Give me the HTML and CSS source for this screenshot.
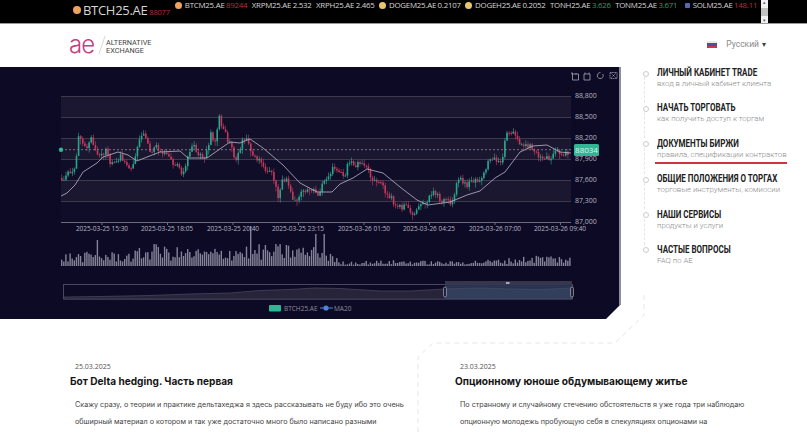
FILE: index.html
```html
<!DOCTYPE html>
<html lang="ru">
<head>
    <meta charset="UTF-8">
    <meta name="viewport" content="width=device-width, initial-scale=1.0">
    <title>Alternative Exchange</title>
    <link rel="stylesheet" href="styles.css">
</head>
<body>
    <div class="ticker">
        <div class="ticker-list">
            <div class="tick tick-big"><span class="coin coin-btc"></span><span class="sym">BTCH25.AE</span> <span class="down">88077</span></div>
            <div class="tick"><span class="coin coin-btc"></span><span class="sym">BTCM25.AE</span> <span class="down">89244</span></div>
            <div class="tick"><span class="sym">XRPM25.AE</span> 2.532</div>
            <div class="tick"><span class="sym">XRPH25.AE</span> 2.465</div>
            <div class="tick"><span class="coin coin-doge"></span><span class="sym">DOGEM25.AE</span> 0.2107</div>
            <div class="tick"><span class="coin coin-doge"></span><span class="sym">DOGEH25.AE</span> 0.2052</div>
            <div class="tick"><span class="sym">TONH25.AE</span> <span class="up">3.626</span></div>
            <div class="tick"><span class="sym">TONM25.AE</span> <span class="up">3.671</span></div>
            <div class="tick"><span class="coin coin-sol"></span><span class="sym">SOLM25.AE</span> <span class="down">148.11</span></div>
        </div>
        <div class="scrollbar"><span class="scroll-arrow">▴</span><span class="scroll-thumb"></span><span class="scroll-arrow">▾</span></div>
    </div>

    <div class="header">
        <div class="logo">
            <span class="logo-ae">ae</span>
            <svg class="logo-slash" width="8" height="20" viewBox="0 0 8 20"><path d="M7 1L1 19" stroke="#d8d8d8" fill="none"/></svg>
            <span class="logo-name">ALTERNATIVE<br>EXCHANGE</span>
        </div>
        <div class="lang">
            <span class="flag"></span>
            <span>Русский</span>
            <span class="lang-caret">▾</span>
        </div>
    </div>

    <div class="top">
        <div class="chart-panel">
            <svg id="chart" class="chart" width="619" height="252" viewBox="0 67 619 252">
                <g id="bands"></g>
                <g id="candles"></g>
                <path id="ma" fill="none" stroke="#b9b8cc" stroke-width="0.8"/>
                <path d="M61 149.7H571" stroke="#2fb795" stroke-width="0.8" stroke-dasharray="2 2"/>
                <circle cx="61" cy="149.7" r="2.2" fill="#2fb795"/>
                <g id="volume" fill="#85839a"></g>

                <g class="y-axis">
                    <text x="575" y="98">88,800</text>
                    <text x="575" y="119">88,500</text>
                    <text x="575" y="140">88,200</text>
                    <text x="575" y="161">87,900</text>
                    <text x="575" y="182">87,600</text>
                    <text x="575" y="203">87,300</text>
                    <text x="575" y="224">87,000</text>
                </g>
                <rect x="574" y="144" width="25" height="12" rx="1.5" fill="#2fb795"/>
                <text class="price-tag" x="586.5" y="153">88034</text>

                <g class="x-axis">
                    <text x="102" y="231">2025-03-25 15:30</text>
                    <text x="167" y="231">2025-03-25 18:05</text>
                    <text x="233" y="231">2025-03-25 20:40</text>
                    <text x="298" y="231">2025-03-25 23:15</text>
                    <text x="364" y="231">2025-03-26 01:50</text>
                    <text x="429" y="231">2025-03-26 04:25</text>
                    <text x="495" y="231">2025-03-26 07:00</text>
                    <text x="560" y="231">2025-03-26 09:40</text>
                </g>

                <g fill="none" stroke="#a5a4b3" stroke-width="0.8">
                    <path d="M571 73h1.500v7h6v-6h-7M576 73v1.500"/>
                    <path d="M584 74h6v6h-6zM585 72.500v1.500M589 72.500v1.500"/>
                    <path d="M600.500 72.600a3 3 0 1 0 2.200 1.300M598 75a3 3 0 0 1 0-.4"/>
                    <path d="M610 72.500h7v6h-7zM611.500 73.500l4 4M615.500 73.500l-4 4" stroke-dasharray="1.500 0.700"/>
                </g>

                <!-- data zoom -->
                <rect x="63.500" y="284.500" width="509" height="14.500" fill="none" stroke="#4a465f"/>
                <path id="zoomArea" fill="#272339" stroke="#4e4a64" stroke-width="0.7"/>
                <rect x="445" y="281" width="127" height="4" fill="#37364c"/>
                <rect x="506" y="282" width="3.500" height="2" fill="#a9a8b5"/>
                <rect x="445" y="285" width="127" height="14" fill="#3a5072" fill-opacity="0.6"/>
                <rect x="443.500" y="287" width="3" height="10" rx="1.500" fill="#1f2238" stroke="#a5a4b3" stroke-width="0.7"/>
                <rect x="570.500" y="287" width="3" height="10" rx="1.500" fill="#1f2238" stroke="#a5a4b3" stroke-width="0.7"/>

                <!-- legend -->
                <rect x="269" y="305" width="12" height="6.500" rx="1" fill="#2fb795"/>
                <text class="legend" x="284" y="310.500">BTCH25.AE</text>
                <path d="M320 308H333" stroke="#4d82d8"/>
                <circle cx="326" cy="308" r="2.600" fill="#4d82d8"/>
                <text class="legend" x="334" y="310.500">MA20</text>
            </svg>
        </div>

        <ul class="side-nav">
            <li class="nav-item"><h3>ЛИЧНЫЙ КАБИНЕТ TRADE</h3><p>вход в личный кабинет клиента</p></li>
            <li class="nav-item"><h3>НАЧАТЬ ТОРГОВАТЬ</h3><p>как получить доступ к торгам</p></li>
            <li class="nav-item nav-active"><h3>ДОКУМЕНТЫ БИРЖИ</h3><p>правила, спецификации контрактов</p></li>
            <li class="nav-item"><h3>ОБЩИЕ ПОЛОЖЕНИЯ О ТОРГАХ</h3><p>торговые инструменты, комиосии</p></li>
            <li class="nav-item"><h3>НАШИ СЕРВИСЫ</h3><p>продукты и услуги</p></li>
            <li class="nav-item"><h3>ЧАСТЫЕ ВОПРОСЫ</h3><p>FAQ по AE</p></li>
        </ul>
    </div>

    <svg class="dashes" width="807" height="436" viewBox="0 0 807 436">
        <path d="M644 295V315L615 343H433L418 357V436" fill="none" stroke="#e6e6e6" stroke-dasharray="5 4"/>
    </svg>

    <div class="articles">
        <div class="article">
            <div class="article-date">25.03.2025</div>
            <h2>Бот Delta hedging. Часть первая</h2>
            <p>Скажу сразу, о теории и практике дельтахеджа я здесь рассказывать не буду ибо это очень<br>обширный материал о котором и так уже достаточно много было написано разными</p>
        </div>
        <div class="article">
            <div class="article-date">23.03.2025</div>
            <h2>Опционному юноше обдумывающему житье</h2>
            <p>По странному и случайному стечению обстоятельств я уже года три наблюдаю<br>опционную молодежь пробующую себя в спекуляциях опционами на</p>
        </div>
    </div>

    <script src="chart.js"></script>
</body>
</html>
```

FILE: styles.css
```css
* {
    margin: 0;
    padding: 0;
    box-sizing: border-box;
}

html, body {
    height: 100%;
    overflow: hidden;
}

body {
    position: relative;
    font-family: 'Open Sans', sans-serif;
    background: #fff;
    color: #222;
}

.ticker {
    height: 24px;
    background: #000;
    border-bottom: 1px solid #9a9a9a;
    display: flex;
    padding-left: 73px;
}

.ticker-list {
    width: 688px;
    display: flex;
    align-items: flex-start;
    color: #d6d6d6;
    font-size: 7.900px;
    line-height: 11px;
    letter-spacing: -0.25px;
    white-space: nowrap;
    overflow: hidden;
}

.tick {
    display: flex;
    align-items: center;
    gap: 1.500px;
    margin-right: 4.400px;
}

.tick-big {
    font-size: 13px;
    line-height: 20px;
    margin-right: 5px;
    align-items: flex-end;
    letter-spacing: -0.3px;
    gap: 2px;
}

.tick-big .down {
    font-size: 7.500px;
    line-height: 15px;
    letter-spacing: -0.2px;
}

.tick-big .coin {
    align-self: center;
    width: 8px;
    height: 8px;
    margin-right: 0;
}

.coin {
    width: 7px;
    height: 7px;
    border-radius: 50%;
    margin-right: 1.500px;
    flex: none;
}

.coin-btc { background: #eda35e; }
.coin-doge { background: #e6c66f; }
.coin-sol { background: #5c66b8; width: 5px; height: 5px; border-radius: 1px; margin: 0 1.500px 0 3px; }

.down { color: #b4303f; }
.up { color: #2c9c6c; }

.scrollbar {
    width: 7px;
    height: 23px;
    background: #f1f1f1;
    display: flex;
    flex-direction: column;
    align-items: center;
    justify-content: space-between;
}

.scroll-arrow {
    font-size: 5px;
    line-height: 5px;
    color: #666;
}

.scroll-thumb {
    width: 7px;
    height: 8px;
    background: #c1c1c1;
}

.header {
    height: 43px;
    display: flex;
    align-items: center;
    justify-content: space-between;
    padding: 0 41px 1px 69px;
}

.logo {
    display: flex;
    align-items: center;
}

.logo-ae {
    font-family: 'Inter', sans-serif;
    font-weight: 300;
    font-size: 24px;
    line-height: 30px;
    letter-spacing: -1px;
    color: #c63d82;
}

.logo-slash {
    margin: 0 0 0 4px;
}

.logo-name {
    font-family: 'Roboto', sans-serif;
    font-size: 7.300px;
    line-height: 8px;
    color: #444;
    padding-top: 3px;
}

.lang {
    display: flex;
    align-items: center;
    font-family: 'Roboto', sans-serif;
    font-size: 8.500px;
    color: #888;
    padding-bottom: 2px;
}

.flag {
    width: 10px;
    height: 7px;
    margin-right: 9px;
    background: linear-gradient(#e8e8f0 0 33%, #4a4f9c 33% 66%, #c23a4a 66%);
}

.lang-caret {
    margin-left: 3px;
    font-size: 8px;
    color: #444;
}

.top {
    display: flex;
    height: 252px;
}

.chart-panel {
    width: 621px;
    height: 252px;
    flex: none;
    background: #0d0a25;
    border-right: 2px solid #8f8e9c;
    clip-path: polygon(0 0, 100% 0, 100% 237px, 606px 100%, 0 100%);
}

.chart {
    display: block;
}

.y-axis text, .x-axis text {
    font-family: 'Open Sans', sans-serif;
    font-size: 7px;
    fill: #b5b4c0;
}

.x-axis text {
    text-anchor: middle;
    font-size: 6.500px;
}

.price-tag {
    font-family: 'Open Sans', sans-serif;
    font-size: 8px;
    fill: #d8f3ea;
    text-anchor: middle;
}

.legend {
    font-family: 'Open Sans', sans-serif;
    font-size: 6.500px;
    fill: #8d8c9c;
}

.side-nav {
    list-style: none;
    padding: 0 0 0 36px;
}

.nav-item {
    height: 35.400px;
    position: relative;
    z-index: 1;
}

.nav-item::before {
    content: '';
    position: absolute;
    left: -14.500px;
    top: 3.500px;
    width: 4px;
    height: 4px;
    border: 1px solid #ccc;
    border-radius: 50%;
    background: #fff;
}

.nav-item:not(:last-child)::after {
    content: '';
    position: absolute;
    left: -13px;
    top: 10px;
    height: 26px;
    border-left: 1px dashed #e6e6e6;
}

.nav-item h3 {
    font-family: 'Roboto', sans-serif;
    font-size: 10px;
    line-height: 11px;
    font-weight: 700;
    color: #222;
    white-space: nowrap;
    transform: scaleX(0.8);
    transform-origin: left center;
}

.nav-item p {
    font-family: 'Roboto', sans-serif;
    font-weight: 300;
    font-size: 7.800px;
    line-height: 11px;
    color: #8c8c8c;
    white-space: nowrap;
}

.nav-active p {
    border-bottom: 2px solid #c8373f;
    margin-left: -2px;
    padding-left: 2px;
    padding-bottom: 2px;
    width: 132px;
}

.dashes {
    position: absolute;
    left: 0;
    top: 0;
    pointer-events: none;
}

.articles {
    display: flex;
    padding: 43px 0 0 70px;
}

.article {
    position: relative;
    width: 385px;
    flex: none;
}

.article-date {
    font-size: 7px;
    line-height: 10px;
    color: #555;
    padding-left: 5px;
}

.article h2 {
    font-family: 'Inter', sans-serif;
    font-size: 10.100px;
    line-height: 14px;
    font-weight: 700;
    color: #151515;
    margin: 2px 0 8px;
    white-space: nowrap;
}

.article p {
    font-family: 'Inter', sans-serif;
    font-size: 7.200px;
    line-height: 17px;
    color: #444;
    padding-left: 5px;
    white-space: nowrap;
}
```

FILE: chart.js
```js
var NS = 'http://www.w3.org/2000/svg';

// price path traced by hand, [x, y] in page pixels
var pricePath = [[61,178],[65,182],[68,173],[72,172],[77,165],[80,138],[83,143],[87,148],[93,137],[97,152],[102,158],[107,150],[112,163],[117,165],[122,157],[128,168],[133,168],[139,148],[143,133],[147,140],[152,152],[158,147],[163,155],[168,152],[173,163],[178,163],[183,175],[188,163],[193,145],[200,153],[207,157],[212,135],[217,142],[220,117],[225,130],[230,143],[238,160],[243,142],[248,138],[253,152],[258,160],[263,160],[267,173],[272,172],[277,185],[279,202],[283,182],[288,177],[293,198],[297,202],[303,193],[312,190],[317,192],[320,197],[325,182],[330,178],[335,165],[340,172],[345,178],[350,162],[357,165],[367,163],[372,180],[382,185],[390,195],[398,207],[407,207],[415,213],[420,205],[427,203],[435,192],[443,200],[453,202],[460,178],[467,185],[475,182],[483,178],[492,157],[503,160],[508,133],[515,133],[523,145],[532,147],[540,155],[552,160],[558,150],[566,155],[571,152]];
var maPath = [[61,196],[67,193],[75,185],[83,172],[97,163],[103,157],[118,152],[128,155],[137,161],[147,157],[160,152],[180,151],[188,158],[207,158],[217,151],[230,142],[240,143],[250,139],[263,148],[283,165],[300,183],[317,192],[320,192],[332,192],[340,184],[353,178],[367,169],[383,173],[400,187],[417,200],[428,205],[450,202],[467,195],[480,191],[495,178],[505,172],[520,152],[533,146],[547,145],[560,152],[571,153]];
// rough volume height along the x axis
var volEnvelope = [[61,11],[90,12],[130,12],[150,19],[175,16],[210,15],[240,18],[290,19],[325,15],[340,4],[400,5],[450,4],[500,6],[540,10],[571,8]];
var spikes = { 97: 26, 249: 40, 315: 32, 323: 32, 153: 22, 158: 19 };

var seed = 2025;
function rnd() {
    seed = (seed * 1103515245 + 12345) % 2147483648;
    return seed / 2147483648;
}

function interp(path, x) {
    for (var i = 1; i < path.length; i++) {
        if (x <= path[i][0]) {
            var a = path[i - 1], b = path[i];
            return a[1] + (b[1] - a[1]) * (x - a[0]) / (b[0] - a[0]);
        }
    }
    return path[path.length - 1][1];
}

function add(parent, tag, attrs) {
    var el = document.createElementNS(NS, tag);
    for (var k in attrs) el.setAttribute(k, attrs[k]);
    parent.appendChild(el);
    return el;
}

function line(path) {
    return 'M' + path.map(function (p) { return p[0] + ' ' + p[1]; }).join('L');
}

// background bands and grid
var bands = document.getElementById('bands');
for (var b = 0; b < 6; b++) {
    add(bands, 'rect', { x: 61, y: 96 + b * 21, width: 510, height: 21, fill: b % 2 ? '#100d29' : '#1b1731' });
}
for (var g = 0; g <= 6; g++) {
    add(bands, 'rect', { x: 61, y: 96 + g * 21, width: 510, height: 1, fill: g === 6 ? '#6d6b80' : '#3d3a4e' });
}
for (var t = 0; t < 8; t++) {
    add(bands, 'rect', { x: 101.500 + t * 65.500, y: 222, width: 1, height: 3, fill: '#6d6b80' });
}

// candles
var candles = document.getElementById('candles');
var step = 2.1;
var prev = interp(pricePath, 61);
for (var cx = 61; cx < 568; cx += step) {
    var last = interp(pricePath, cx + step) + (rnd() - 0.5) * 6;
    var bodyTop = Math.min(prev, last), bodyBottom = Math.max(prev, last);
    var color = last < prev ? '#28a68c' : '#c4385a';
    add(candles, 'rect', { x: cx + 0.5, y: bodyTop - 1 - rnd() * 3, width: 0.6, height: bodyBottom - bodyTop + 2 + rnd() * 5, fill: color });
    add(candles, 'rect', { x: cx, y: bodyTop, width: 1.6, height: Math.max(bodyBottom - bodyTop, 1), fill: color });
    prev = last;
}

document.getElementById('ma').setAttribute('d', line(maPath));

// volume bars
var volume = document.getElementById('volume');
for (var vx = 61; vx < 571; vx += step) {
    var h = interp(volEnvelope, vx) * (0.3 + rnd() * 0.9);
    for (var s in spikes) {
        if (Math.abs(vx - s) < step / 2) h = spikes[s];
    }
    add(volume, 'rect', { x: vx, y: 266 - h, width: 1.4, height: h });
}

// area in the data zoom
var area = [[64,297],[100,296.500],[150,295.500],[190,294],[230,293],[260,290.500],[290,289.500],[315,288],[340,288.500],[380,291],[410,291],[445,289],[480,288],[510,289],[540,289.500],[572,288]];
document.getElementById('zoomArea').setAttribute('d', line(area) + 'V299H64Z');
```
